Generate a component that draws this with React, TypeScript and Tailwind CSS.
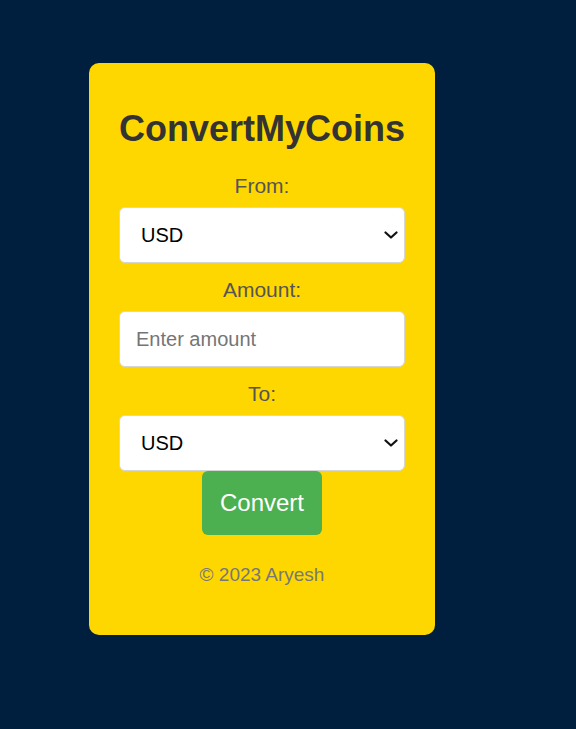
import React from 'react';

const Chevron = () => (
  <svg
    className="pointer-events-none absolute right-[7px] top-1/2 -translate-y-1/2"
    width="14"
    height="8"
    viewBox="0 0 14 8"
    fill="none"
  >
    <path d="M1.5 1.5 L7 6.5 L12.5 1.5" stroke="#111" strokeWidth="2.2" strokeLinecap="round" strokeLinejoin="round" />
  </svg>
);

const CurrencySelect = () => (
  <div className="relative">
    <select
      defaultValue="USD"
      className="block h-[56px] w-full appearance-none rounded-[6px] border border-[#d6d6d6] bg-white pl-[21px] text-[20px] text-black outline-none"
    >
      <option>USD</option>
      <option>EUR</option>
      <option>GBP</option>
      <option>INR</option>
    </select>
    <Chevron />
  </div>
);

const App = () => {
  return (
    <div className="min-h-screen bg-[#001f3f] pl-[89px] pt-[63px] font-['Liberation_Sans',Arial,sans-serif]">
      {/* Converter card */}
      <div className="w-[346px] rounded-[10px] bg-[#ffd700] px-[30px] pb-[49px] pt-[45px] text-center">
        <h1 className="text-[36px] font-bold leading-[42px] text-[#333]">ConvertMyCoins</h1>

        <label className="mb-[9px] mt-[24px] block text-[21px] leading-[24px] text-[#555]">From:</label>
        <CurrencySelect />

        <label className="mb-[9px] mt-[15px] block text-[21px] leading-[24px] text-[#555]">Amount:</label>
        <input
          type="number"
          placeholder="Enter amount"
          className="block h-[56px] w-full rounded-[6px] border border-[#d6d6d6] bg-white pl-[16px] text-[20px] text-black outline-none placeholder:text-[#757575]"
        />

        <label className="mb-[9px] mt-[15px] block text-[21px] leading-[24px] text-[#555]">To:</label>
        <CurrencySelect />

        <button className="mx-auto block rounded-[6px] bg-[#4caf50] px-[18px] py-[18px] text-[24px] leading-[28px] text-white">
          Convert
        </button>

        <p className="mt-[29px] text-[19px] leading-[22px] text-[#777]">© 2023 Aryesh</p>
      </div>
    </div>
  );
};

export default App;
